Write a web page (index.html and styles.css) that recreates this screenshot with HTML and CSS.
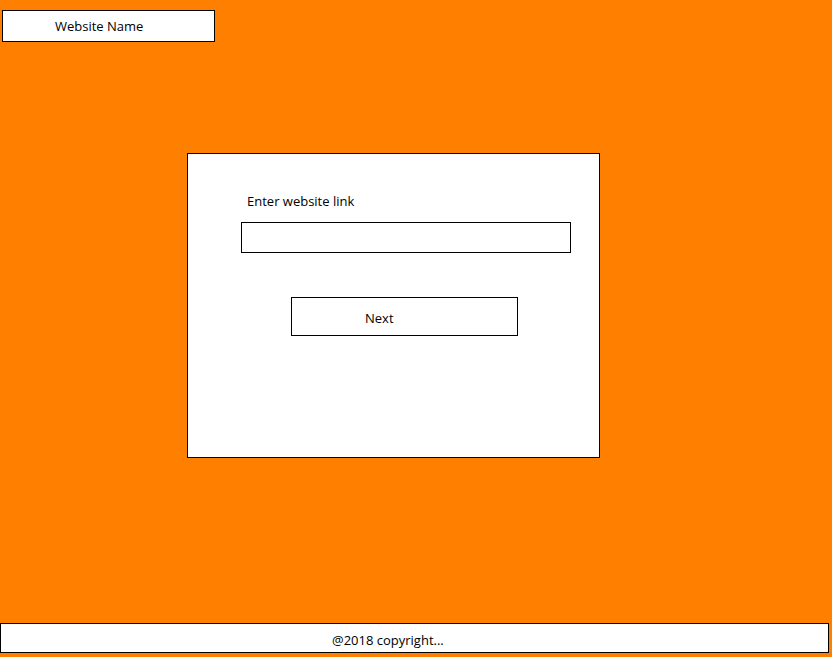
FILE: index.html
```html
<!DOCTYPE html>
<html>
<head>
<meta charset="utf-8">
<link rel="stylesheet" href="styles.css">
</head>
<body>
<div class="page">
  <header class="site-name">Website Name</header>
  <main class="card">
    <label class="label" for="link">Enter website link</label>
    <input class="link-input" id="link" type="text">
    <button class="next-btn" type="button">Next</button>
  </main>
  <footer class="footer">@2018 copyright...</footer>
</div>
</body>
</html>
```
FILE: styles.css
```css
html, body {
  margin: 0;
  padding: 0;
}
body {
  background: #ff8000;
  font-family: "Open Sans", "Noto Sans", sans-serif;
  font-size: 13px;
  color: #000;
}
.page {
  display: flex;
  flex-direction: column;
  align-items: flex-start;
  height: 657px;
}
.site-name {
  box-sizing: border-box;
  margin: 10px 0 0 2px;
  width: 213px;
  height: 32px;
  border: 1px solid #000;
  background: #fff;
  padding: 0 0 1px 52px;
  display: flex;
  align-items: center;
}
.card {
  box-sizing: border-box;
  margin: 111px 0 0 187px;
  width: 413px;
  height: 305px;
  border: 1px solid #000;
  background: #fff;
  display: flex;
  flex-direction: column;
  align-items: flex-start;
}
.label {
  margin: 38px 0 0 59px;
  line-height: 18px;
}
.link-input {
  box-sizing: border-box;
  margin: 12px 0 0 53px;
  width: 330px;
  height: 31px;
  border: 1px solid #000;
  border-radius: 0;
  padding: 0;
  background: #fff;
  outline: none;
}
.next-btn {
  box-sizing: border-box;
  margin: 44px 0 0 103px;
  width: 227px;
  height: 39px;
  border: 1px solid #000;
  border-radius: 0;
  background: #fff;
  font: inherit;
  color: #000;
  text-align: left;
  padding: 2px 0 0 73px;
}
.footer {
  box-sizing: border-box;
  margin: auto 0 4px 0;
  width: 829px;
  height: 30px;
  border: 1px solid #000;
  background: #fff;
  padding: 3px 0 0 331px;
  display: flex;
  align-items: center;
}
```
